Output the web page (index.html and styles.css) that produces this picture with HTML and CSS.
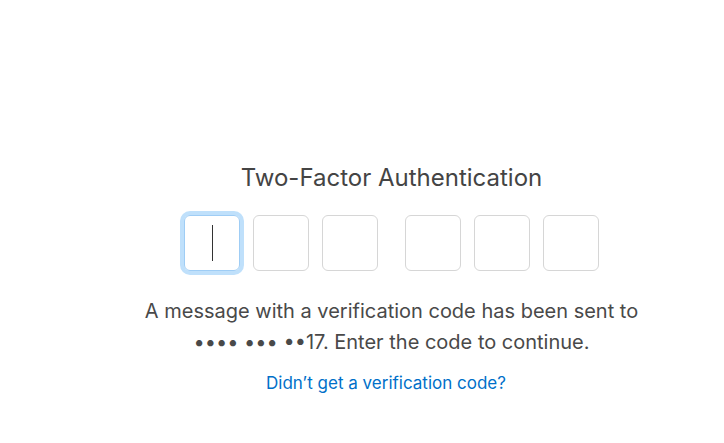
FILE: index.html
```html
<!DOCTYPE html>
<html lang="en">
<head>
  <meta charset="UTF-8">
  <title>Two-Factor Authentication</title>
  <link rel="stylesheet" href="styles.css">
</head>
<body>
  <div class="page">
    <div class="verify">
      <h1 class="title">Two-Factor Authentication</h1>

      <div class="code">
        <div class="group">
          <div class="digit focused"><span class="caret"></span></div>
          <div class="digit"></div>
          <div class="digit"></div>
        </div>
        <div class="group">
          <div class="digit"></div>
          <div class="digit"></div>
          <div class="digit"></div>
        </div>
      </div>

      <p class="message">A message with a verification code has been sent to<br>•••• ••• ••17. Enter the code to continue.</p>

      <a class="resend" href="#">Didn’t get a verification code?</a>
    </div>
  </div>
</body>
</html>
```

FILE: styles.css
```css
* {
  margin: 0;
  padding: 0;
  box-sizing: border-box;
}

body {
  font-family: 'Inter', 'Noto Sans', sans-serif;
  background: #fff;
  color: #494949;
}

.page {
  padding: 160px 0 0 59px;
}

.verify {
  display: flex;
  flex-direction: column;
  align-items: center;
  text-align: center;
}

.title {
  font-size: 24px;
  font-weight: 400;
  line-height: 36px;
  color: #444;
}

/* CODE BOXES */
.code {
  display: flex;
  gap: 27px;
  margin-top: 19px;
}

.group {
  display: flex;
  gap: 13px;
}

.digit {
  width: 56px;
  height: 56px;
  border: 1px solid #d6d6d6;
  border-radius: 6px;
  display: flex;
  justify-content: center;
  align-items: center;
}

.digit.focused {
  border-color: #9fcdf5;
  box-shadow: 0 0 0 4px #bfe0fb;
}

.caret {
  width: 1px;
  height: 36px;
  background: #333;
}

.message {
  font-size: 20px;
  line-height: 31px;
  margin-top: 25px;
}

.resend {
  margin-top: 12px;
  margin-right: 11px;
  font-size: 17px;
  line-height: 26px;
  color: #0070c9;
  text-decoration: none;
}
```
